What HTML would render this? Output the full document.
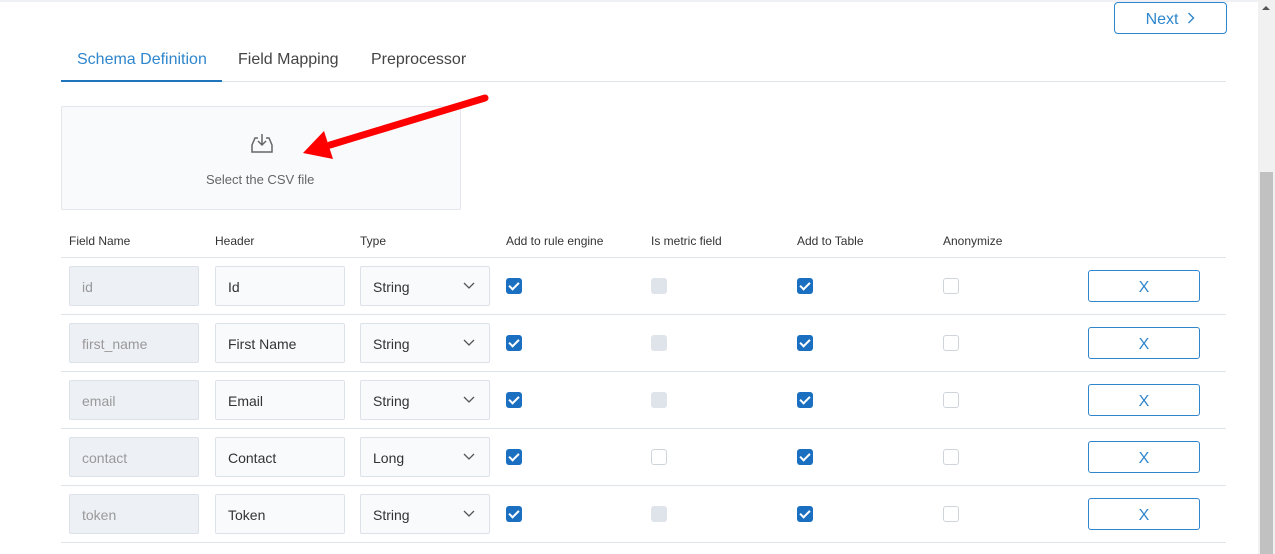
<!DOCTYPE html>
<html><head><style>
*{box-sizing:border-box;margin:0;padding:0}
body{width:1275px;height:554px;overflow:hidden;background:#fff;font-family:"Liberation Sans",sans-serif;position:relative;color:#333}
.a{position:absolute}
.tab{position:absolute;top:51px;font-size:16px;color:#444}
.hd{position:absolute;top:234px;font-size:12px;color:#333}
.inp{position:absolute;height:40px;border:1px solid #dde2ea;background:#f9fafc;font-size:14px;line-height:40px;padding-left:12px;color:#333;border-radius:2px}
.fn{background:#edf0f5;color:#999}
.cb{position:absolute;width:16px;height:16px;border-radius:3px}
.on{background:#1a6fc0}
.on::after{content:"";position:absolute;left:5px;top:2px;width:4px;height:8px;border:solid #fff;border-width:0 2px 2px 0;transform:rotate(45deg)}
.dis{background:#dfe3ea}
.off{border:1px solid #cfd4db;background:#fff}
.xb{position:absolute;left:1088px;width:112px;height:32px;border:1px solid #2f86cc;border-radius:3px;color:#2f86cc;text-align:center;line-height:34px;font-size:16px}
.line{position:absolute;left:61px;width:1165px;height:1px;background:#dfe3ea}
</style></head><body>
<div class="a" style="left:0;top:0;width:1258px;height:2px;background:#eef0f3"></div>
<div class="a" style="left:1114px;top:2px;width:113px;height:32px;border:1px solid #2f86cc;border-radius:4px;color:#2f86cc;font-size:16px;line-height:33px;text-align:center">Next &nbsp;<svg width="8" height="12" viewBox="0 0 8 12"><path d="M1.5 1l5 5-5 5" fill="none" stroke="#2f86cc" stroke-width="1.4"/></svg></div>
<div class="tab" style="left:77px;color:#2f86cc">Schema Definition</div>
<div class="tab" style="left:238px">Field Mapping</div>
<div class="tab" style="left:371px">Preprocessor</div>
<div class="line" style="top:81px"></div>
<div class="a" style="left:61px;top:80px;width:161px;height:2px;background:#2074bb"></div>
<div class="a" style="left:61px;top:106px;width:400px;height:104px;border:1px solid #e3e6ec;background:#f9fafc;border-radius:2px"></div>
<svg class="a" style="left:249px;top:131px" width="26" height="24" viewBox="0 0 26 24"><path d="M13 3v11M9 10l4 4 4-4M9 7H6L3 14v7h20v-7l-3-7h-3" fill="none" stroke="#666" stroke-width="1.5"/></svg>
<div class="a" style="left:206px;top:172px;font-size:13px;color:#666">Select the CSV file</div>
<svg class="a" style="left:0;top:0" width="600" height="200"><line x1="485" y1="98" x2="330" y2="145" stroke="#f00" stroke-width="7" stroke-linecap="round"/><polygon points="303,153 324,131 333,159" fill="#f00"/></svg>
<div class="hd" style="left:69px">Field Name</div><div class="hd" style="left:215px">Header</div><div class="hd" style="left:360px">Type</div><div class="hd" style="left:506px">Add to rule engine</div><div class="hd" style="left:651px">Is metric field</div><div class="hd" style="left:797px">Add to Table</div><div class="hd" style="left:943px">Anonymize</div>
<div class="line" style="top:257px"></div>
<div id="rows"></div>
<script>
var d=[["id","Id","String","dis"],["first_name","First Name","String","dis"],["email","Email","String","dis"],["contact","Contact","Long","off"],["token","Token","String","dis"]];
var h="";d.forEach(function(r,i){var t=257+57*i;
h+='<div class="inp fn" style="left:69px;top:'+(t+9)+'px;width:130px">'+r[0]+'</div>';
h+='<div class="inp" style="left:215px;top:'+(t+9)+'px;width:130px">'+r[1]+'</div>';
h+='<div class="inp" style="left:360px;top:'+(t+9)+'px;width:130px">'+r[2]+'<svg style="position:absolute;right:14px;top:15px" width="12" height="8"><path d="M1 1l5 5 5-5" fill="none" stroke="#555" stroke-width="1.3"/></svg></div>';
h+='<div class="cb on" style="left:506px;top:'+(t+21)+'px"></div>';
h+='<div class="cb '+r[3]+'" style="left:651px;top:'+(t+21)+'px"></div>';
h+='<div class="cb on" style="left:797px;top:'+(t+21)+'px"></div>';
h+='<div class="cb off" style="left:943px;top:'+(t+21)+'px"></div>';
h+='<div class="xb" style="top:'+(t+13)+'px">X</div>';
h+='<div class="line" style="top:'+(t+57)+'px"></div>';});
document.getElementById("rows").innerHTML=h;
</script>
<div class="a" style="left:1258px;top:0;width:17px;height:554px;background:#f1f1f1"></div>
<div class="a" style="left:1260px;top:172px;width:13px;height:382px;background:#c1c1c1"></div>
<div class="a" style="left:1262px;top:6px;width:0;height:0;border:4px solid transparent;border-bottom:4px solid #555;border-top:0"></div>
</body></html>
